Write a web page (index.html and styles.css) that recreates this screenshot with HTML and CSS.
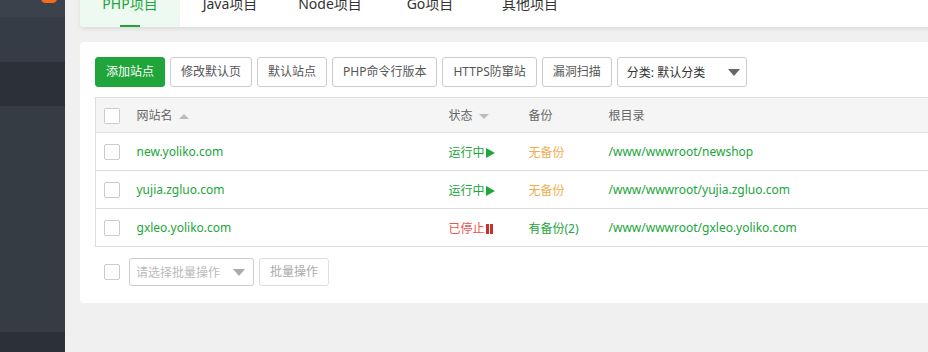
FILE: index.html
```html
<!DOCTYPE html>
<html lang="zh-CN">
<head>
<meta charset="utf-8">
<title>网站</title>
<link rel="stylesheet" href="styles.css">
</head>
<body>
<div class="layout">
  <aside class="sidebar">
    <div class="band band-top"><span class="badge"></span></div>
    <div class="band band-a"></div>
    <div class="band band-dark"></div>
    <div class="band band-b"></div>
    <div class="band band-dark2"></div>
  </aside>
  <main class="main">
    <nav class="tabs">
      <div class="tab active">PHP项目</div>
      <div class="tab">Java项目</div>
      <div class="tab">Node项目</div>
      <div class="tab">Go项目</div>
      <div class="tab">其他项目</div>
      <div class="tab-fill"></div>
    </nav>
    <section class="card">
      <div class="toolbar">
        <button class="btn btn-primary">添加站点</button>
        <button class="btn">修改默认页</button>
        <button class="btn">默认站点</button>
        <button class="btn">PHP命令行版本</button>
        <button class="btn">HTTPS防窜站</button>
        <button class="btn">漏洞扫描</button>
        <div class="select select-cat">
          <span>分类: 默认分类</span>
          <svg class="caret" width="12" height="7" viewBox="0 0 12 7"><path d="M0 0H12L6 7Z" fill="#666"/></svg>
        </div>
      </div>
      <table class="sites">
        <colgroup>
          <col class="c-check"><col class="c-name"><col class="c-status"><col class="c-backup"><col class="c-root">
        </colgroup>
        <thead>
          <tr>
            <th><span class="check"></span></th>
            <th>网站名 <svg class="sort" width="10" height="5" viewBox="0 0 10 5"><path d="M0 5H10L5 0Z" fill="#bbb"/></svg></th>
            <th>状态 <svg class="sort" width="10" height="5" viewBox="0 0 10 5"><path d="M0 0H10L5 5Z" fill="#bbb"/></svg></th>
            <th>备份</th>
            <th>根目录</th>
          </tr>
        </thead>
        <tbody>
          <tr>
            <td><span class="check"></span></td>
            <td class="green">new.yoliko.com</td>
            <td class="green">运行中<svg class="ico" width="9" height="10" viewBox="0 0 9 10"><path d="M0 0L9 5L0 10Z" fill="#20a53a"/></svg></td>
            <td class="orange">无备份</td>
            <td class="green">/www/wwwroot/newshop</td>
          </tr>
          <tr>
            <td><span class="check"></span></td>
            <td class="green">yujia.zgluo.com</td>
            <td class="green">运行中<svg class="ico" width="9" height="10" viewBox="0 0 9 10"><path d="M0 0L9 5L0 10Z" fill="#20a53a"/></svg></td>
            <td class="orange">无备份</td>
            <td class="green">/www/wwwroot/yujia.zgluo.com</td>
          </tr>
          <tr>
            <td><span class="check"></span></td>
            <td class="green">gxleo.yoliko.com</td>
            <td class="red">已停止<svg class="ico" width="7" height="10" viewBox="0 0 7 10"><rect x="0" y="0" width="3" height="10" fill="#c9302c"/><rect x="4" y="0" width="3" height="10" fill="#c9302c"/></svg></td>
            <td class="green">有备份(2)</td>
            <td class="green">/www/wwwroot/gxleo.yoliko.com</td>
          </tr>
        </tbody>
      </table>
      <div class="footer">
        <span class="check"></span>
        <div class="select select-batch">
          <span>请选择批量操作</span>
          <svg class="caret" width="12" height="7" viewBox="0 0 12 7"><path d="M0 0H12L6 7Z" fill="#aaa"/></svg>
        </div>
        <button class="btn btn-disabled">批量操作</button>
      </div>
    </section>
  </main>
</div>
</body>
</html>
```

FILE: styles.css
```css
* { box-sizing: border-box; }
html, body { margin: 0; padding: 0; }
body {
  width: 928px;
  height: 352px;
  overflow: hidden;
  background: #f0f0f0;
  font-family: "Noto Sans", "Noto Sans CJK SC", sans-serif;
  font-size: 12px;
  color: #555;
}
.layout {
  display: flex;
  height: 352px;
}
.sidebar {
  width: 65px;
  flex: none;
  display: flex;
  flex-direction: column;
  background: #363c44;
}
.band { position: relative; }
.band-top { height: 17px; background: #3c424b; }
.band-a { height: 45px; background: #363c45; }
.band-dark { height: 44px; background: #2c3039; }
.band-b { height: 226px; background: #363c44; }
.band-dark2 { flex: 1; background: #2c3039; }
.badge {
  position: absolute;
  left: 41px;
  top: -6px;
  width: 16px;
  height: 9px;
  border-radius: 5px;
  background: #f56b1d;
}
.main {
  width: 1000px;
  flex: none;
  padding-left: 15px;
}
.tabs {
  display: flex;
  height: 46px;
  margin-top: -19px;
  margin-bottom: 0;
  background: #fff;
  border-radius: 0 0 0 4px;
  box-shadow: 0 2px 4px rgba(0, 0, 0, 0.08);
  font-size: 14px;
  color: #333;
}
.tab {
  width: 100px;
  line-height: 46px;
  text-align: center;
  position: relative;
}
.tab.active {
  background: #eef9f1;
  color: #20a53a;
  border-radius: 0 0 0 4px;
}
.tab.active::after {
  content: "";
  position: absolute;
  left: 40px;
  bottom: 0;
  width: 20px;
  height: 2px;
  background: #20a53a;
}
.tab-fill { flex: 1; }
.card {
  margin-top: 15px;
  background: #fff;
  border-radius: 4px 0 0 4px;
  padding: 15px 0 17px 15px;
}
.toolbar {
  display: flex;
  gap: 5px;
  height: 30px;
}
.btn {
  height: 30px;
  padding: 0 10px;
  border: 1px solid #ccc;
  border-radius: 3px;
  background: #fff;
  color: #555;
  font-family: "Noto Sans", "Noto Sans CJK SC", sans-serif;
  font-size: 12px;
  line-height: 28px;
  white-space: nowrap;
}
.btn-primary {
  background: #20a53a;
  border-color: #20a53a;
  color: #fff;
}
.select {
  display: flex;
  align-items: center;
  justify-content: space-between;
  border: 1px solid #ccc;
  border-radius: 3px;
  background: #fff;
  padding: 0 6px 0 9px;
}
.select-cat {
  width: 130px;
  height: 30px;
  color: #333;
}
.sites {
  margin-top: 10px;
  width: 900px;
  border-collapse: collapse;
  table-layout: fixed;
  border: 1px solid #ddd;
  border-right: none;
}
.c-check { width: 41px; }
.c-name { width: 312px; }
.c-status { width: 80px; }
.c-backup { width: 80px; }
.sites th {
  height: 35px;
  background: #f5f5f5;
  font-weight: normal;
  text-align: left;
  color: #666;
  padding: 0;
}
.sites td {
  height: 38px;
  padding: 0;
  border-top: 1px solid #ddd;
}
.sites th:first-child, .sites td:first-child { padding-left: 8px; }
.check {
  display: inline-block;
  width: 16px;
  height: 16px;
  border: 1px solid #ccc;
  border-radius: 2px;
  background: #fff;
  vertical-align: middle;
}
.sort { margin-left: 3px; vertical-align: middle; }
.ico { margin-left: 1px; vertical-align: -1px; }
.green { color: #20a53a; }
.orange { color: #f0ad4e; }
.red { color: #ef5350; }
.footer {
  display: flex;
  align-items: center;
  gap: 5px;
  margin-top: 11px;
  padding-left: 9px;
  height: 28px;
}
.footer .check { margin-right: 4px; }
.select-batch {
  width: 125px;
  height: 28px;
  color: #bbb;
  padding: 0 8px 0 6px;
}
.btn-disabled {
  height: 28px;
  line-height: 26px;
  color: #aaa;
  border-color: #ddd;
}
```
